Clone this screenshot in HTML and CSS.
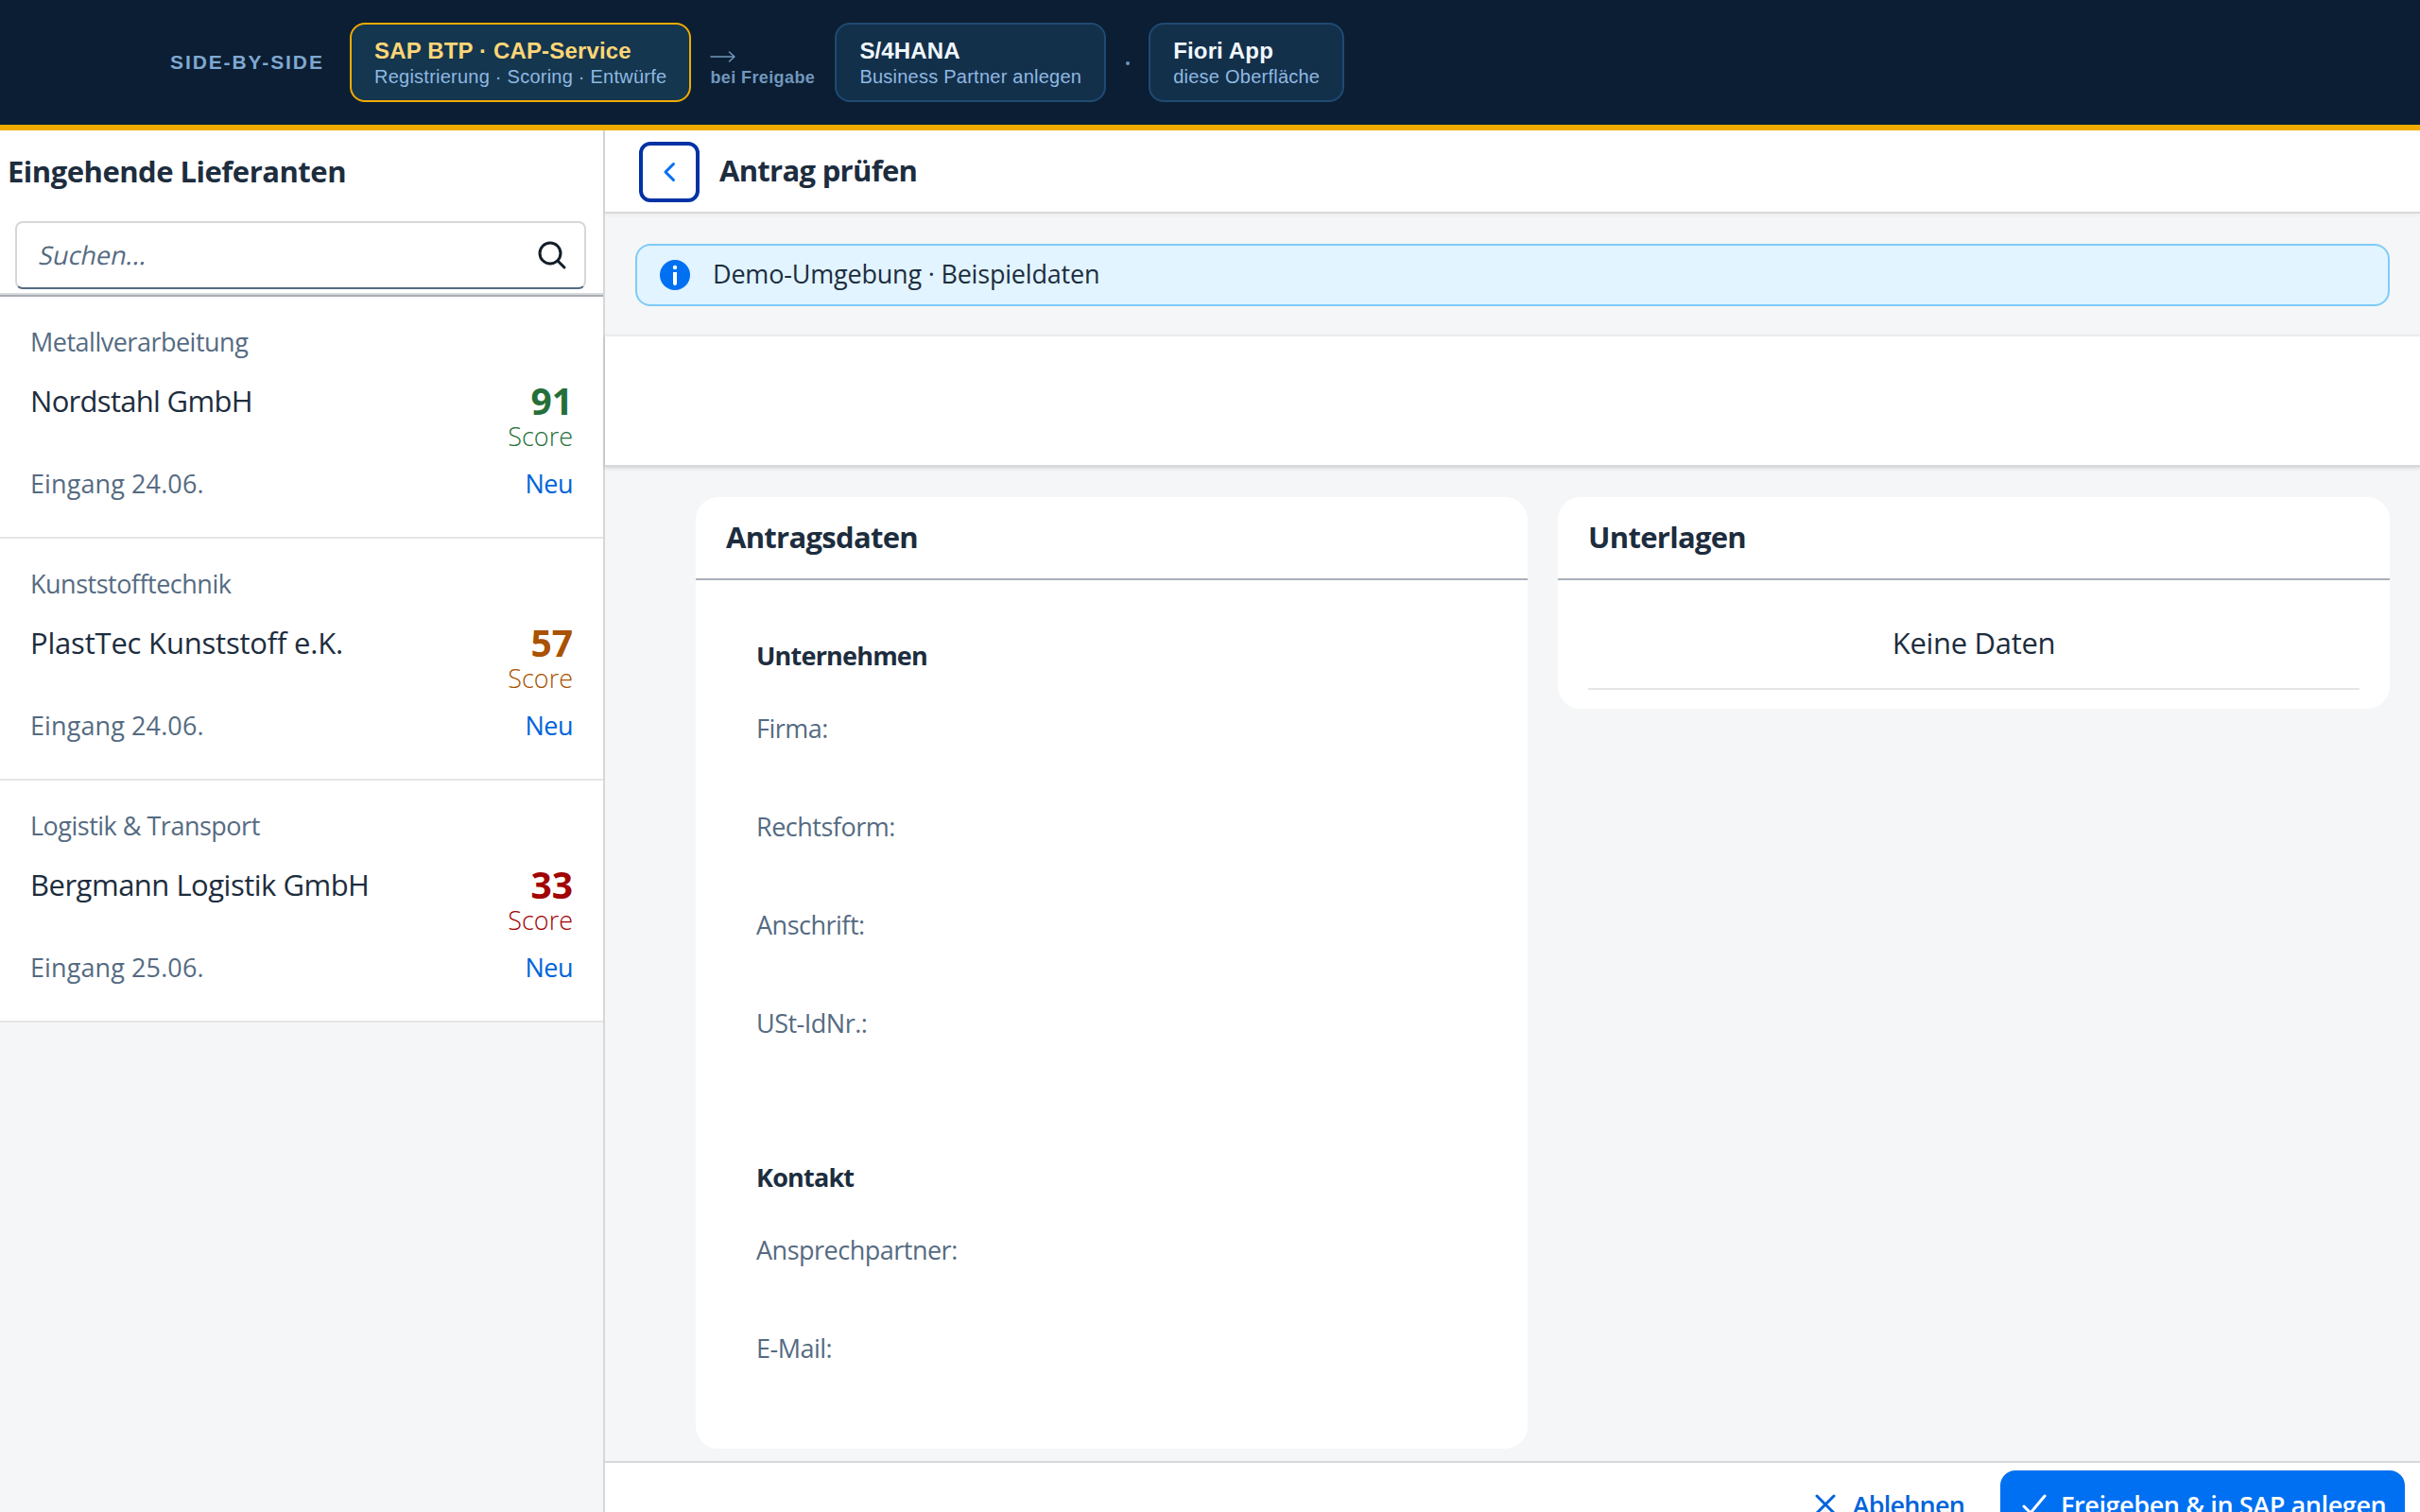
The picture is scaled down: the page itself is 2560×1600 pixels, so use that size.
FILE: index.html
```html
<!DOCTYPE html>
<html lang="de">
<head>
    <meta charset="UTF-8">
    <meta name="viewport" content="width=device-width, initial-scale=1.0">
    <title>Antrag prüfen</title>
    <link rel="stylesheet" href="styles.css">
</head>
<body>
    <header class="topbar">
        <span class="topbar-label">SIDE-BY-SIDE</span>
        <div class="node node-active">
            <b>SAP BTP · CAP-Service</b>
            <small>Registrierung · Scoring · Entwürfe</small>
        </div>
        <div class="link">
            <svg width="28" height="16" viewBox="0 0 28 16"><path d="M1 8h25M20.500 3l5.500 5-5.500 5"/></svg>
            <span>bei Freigabe</span>
        </div>
        <div class="node">
            <b>S/4HANA</b>
            <small>Business Partner anlegen</small>
        </div>
        <span class="dot"></span>
        <div class="node">
            <b>Fiori App</b>
            <small>diese Oberfläche</small>
        </div>
    </header>

    <main class="split">
        <aside class="master">
            <div class="master-head">
                <h2 class="wide">Eingehende Lieferanten</h2>
                <div class="search">
                    <span>Suchen...</span>
                    <svg width="32" height="32" viewBox="0 0 32 32"><circle cx="14" cy="14" r="11"/><path d="M22 22l7 7"/></svg>
                </div>
            </div>
            <ul class="list">
                <li class="good">
                    <p class="intro">Metallverarbeitung</p>
                    <div class="row">
                        <span class="name">Nordstahl GmbH</span>
                        <div class="score"><b>91</b><span>Score</span></div>
                    </div>
                    <div class="row foot"><span class="date">Eingang 24.06.</span><span class="state">Neu</span></div>
                </li>
                <li class="medium">
                    <p class="intro">Kunststofftechnik</p>
                    <div class="row">
                        <span class="name">PlastTec Kunststoff e.K.</span>
                        <div class="score"><b>57</b><span>Score</span></div>
                    </div>
                    <div class="row foot"><span class="date">Eingang 24.06.</span><span class="state">Neu</span></div>
                </li>
                <li class="bad">
                    <p class="intro">Logistik &amp; Transport</p>
                    <div class="row">
                        <span class="name">Bergmann Logistik GmbH</span>
                        <div class="score"><b>33</b><span>Score</span></div>
                    </div>
                    <div class="row foot"><span class="date">Eingang 25.06.</span><span class="state">Neu</span></div>
                </li>
            </ul>
        </aside>

        <section class="detail">
            <div class="detail-head">
                <button class="back">
                    <svg width="16" height="24" viewBox="0 0 16 24"><path d="M12.500 3.500L4 12l8.500 8.500"/></svg>
                </button>
                <h2>Antrag prüfen</h2>
            </div>
            <div class="content">
                <div class="strip">
                    <svg width="32" height="32" viewBox="0 0 32 32"><circle cx="16" cy="16" r="16"/><circle class="i" cx="16" cy="8" r="2.200"/><path class="i" d="M14 13h4v12a2 2 0 0 1-4 0z"/></svg>
                    <span>Demo-Umgebung · Beispieldaten</span>
                </div>
                <div class="object-header"></div>
                <div class="cards">
                    <div class="card">
                        <h2>Antragsdaten</h2>
                        <div class="form">
                            <h3>Unternehmen</h3>
                            <label>Firma:</label>
                            <label>Rechtsform:</label>
                            <label>Anschrift:</label>
                            <label>USt-IdNr.:</label>
                            <h3>Kontakt</h3>
                            <label>Ansprechpartner:</label>
                            <label>E-Mail:</label>
                        </div>
                    </div>
                    <div class="card">
                        <h2>Unterlagen</h2>
                        <div class="table">
                            <div class="empty">Keine Daten</div>
                        </div>
                    </div>
                </div>
            </div>
            <footer class="actions">
                <button class="reject">
                    <svg width="24" height="24" viewBox="0 0 24 24"><path d="M3 3l18 18M21 3L3 21"/></svg>
                    Ablehnen
                </button>
                <button class="approve">
                    <svg width="28" height="24" viewBox="0 0 28 24"><path d="M3 14l7 7L25 3"/></svg>
                    Freigeben &amp; in SAP anlegen
                </button>
            </footer>
        </section>
    </main>
</body>
</html>
```
FILE: styles.css
```css
* {
    box-sizing: border-box;
}
body {
    margin: 0;
    height: 1600px;
    overflow: hidden;
    display: flex;
    flex-direction: column;
    font-family: "Open Sans", "Noto Sans", sans-serif;
    font-size: 27px;
    letter-spacing: -0.5px;
    color: #1d2d3e;
    background: #f5f6f7;
}
h2, h3, p, ul {
    margin: 0;
    padding: 0;
}
h2 {
    font-size: 31px;
    letter-spacing: -0.7px;
}
svg {
    fill: none;
    stroke: currentColor;
    stroke-linecap: round;
    stroke-linejoin: round;
    flex: none;
}
button {
    font: inherit;
    letter-spacing: inherit;
    border: none;
    background: none;
}

/* architecture bar */
.topbar {
    height: 138px;
    flex: none;
    display: flex;
    align-items: center;
    padding-left: 180px;
    font-family: "Liberation Sans", Arial, sans-serif;
    background: #0b1e33;
    border-bottom: 6px solid #f0ab00;
    letter-spacing: 0;
}
.topbar-label {
    width: 190px;
    font-size: 21px;
    font-weight: 700;
    letter-spacing: 1.9px;
    color: #7fa8d1;
}
.node {
    height: 84px;
    padding: 14px 24px 0;
    border: 2px solid #1f4a73;
    border-radius: 16px;
    background: #13304b;
    white-space: nowrap;
}
.node b {
    display: block;
    font-size: 24px;
    line-height: 28px;
    letter-spacing: 0.15px;
    color: #f2f8ff;
}
.node small {
    display: block;
    font-size: 20px;
    line-height: 26px;
    letter-spacing: 0.24px;
    color: #8fb8e0;
}
.node-active {
    border-color: #f0ab00;
    background: #14364f;
}
.node-active b {
    color: #ffd677;
}
.link {
    width: 152px;
    padding: 15px 0 0 20px;
    display: flex;
    flex-direction: column;
    font-size: 18px;
    font-weight: 700;
    line-height: 26px;
    letter-spacing: 0.4px;
    color: #7297bb;
}
.link svg {
    margin-bottom: 1px;
    stroke-width: 1.5;
}
.dot {
    width: 4px;
    height: 4px;
    margin: 2px 20px 0 21px;
    border-radius: 50%;
    background: #7297bb;
}

.split {
    flex: 1;
    min-height: 0;
    display: flex;
}

/* supplier list */
.master {
    width: 640px;
    flex: none;
    border-right: 2px solid #d5d7d9;
}
.master-head {
    height: 176px;
    padding: 22px 18px 0 8px;
    background: #fff;
    border-bottom: 2px solid #a8adb5;
    box-shadow: inset 0 -2px #d9dbdd;
}
.master-head h2 {
    height: 74px;
    line-height: 42px;
}
.master-head .wide {
    letter-spacing: -0.5px;
}
.search {
    height: 72px;
    margin-left: 8px;
    padding: 0 18px 0 24px;
    display: flex;
    align-items: center;
    justify-content: space-between;
    border: 2px solid #d5d7d9;
    border-bottom-color: #556b81;
    border-radius: 8px;
    color: #556b81;
}
.search span {
    margin-bottom: 2px;
    letter-spacing: 0;
    transform: skewX(-12deg);
}
.search svg {
    color: #131e29;
    stroke-width: 3;
}
.list {
    list-style: none;
}
.list li {
    height: 256px;
    padding: 32px 32px 0;
    background: #fff;
    border-bottom: 2px solid #e5e5e5;
    line-height: 32px;
}
.intro, .date {
    color: #556b82;
}
.intro {
    margin-bottom: 26px;
}
.row {
    display: flex;
    justify-content: space-between;
}
.name {
    font-size: 31px;
    line-height: 40px;
    letter-spacing: -0.5px;
}
.good .name {
    letter-spacing: -0.7px;
}
.medium .name {
    letter-spacing: -0.2px;
}
.score {
    display: flex;
    flex-direction: column;
    align-items: flex-end;
    letter-spacing: 0;
}
.score b {
    font-size: 39px;
    line-height: 40px;
}
.score span {
    font-weight: 300;
    line-height: 36px;
}
.foot {
    margin-top: 16px;
}
.date {
    letter-spacing: 0.1px;
}
.state {
    color: #0064d9;
}
.good .score {
    color: #256f3a;
}
.medium .score {
    color: #a95200;
}
.bad .score {
    color: #a20303;
}

/* detail page */
.detail {
    flex: 1;
    display: flex;
    flex-direction: column;
}
.detail-head {
    height: 88px;
    flex: none;
    display: flex;
    align-items: center;
    gap: 21px;
    padding: 0 36px;
    background: #fff;
    border-bottom: 2px solid #d9d9d9;
    box-shadow: 0 2px 4px rgba(34, 53, 72, 0.05);
}
.detail-head h2 {
    margin-bottom: 2px;
}
.back {
    width: 64px;
    height: 64px;
    margin-top: 2px;
    display: flex;
    align-items: center;
    justify-content: center;
    border: 4px solid #0032a5;
    border-radius: 12px;
    color: #0070f2;
}
.back svg {
    stroke-width: 3;
}
.content {
    height: 1320px;
    flex: none;
}
.strip {
    height: 66px;
    margin: 32px;
    padding-left: 24px;
    display: flex;
    align-items: center;
    gap: 24px;
    border: 2px solid #7fcbf8;
    border-radius: 16px;
    background: #e1f4ff;
    letter-spacing: -0.2px;
}
.strip span {
    margin-bottom: 3px;
}
.strip svg {
    margin-bottom: 1px;
    fill: #0070f2;
    stroke: none;
}
.strip .i {
    fill: #fff;
}
.object-header {
    height: 138px;
    background: #fff;
    border-bottom: 2px solid #d9d9d9;
    box-shadow: 0 0 4px rgba(34, 53, 72, 0.16), 0 2px 4px rgba(34, 53, 72, 0.08);
}
.cards {
    display: grid;
    grid-template-columns: 1fr 1fr;
    align-items: start;
    gap: 32px;
    padding: 32px 32px 0 96px;
}
.card {
    background: #fff;
    border-radius: 24px;
}
.card h2 {
    height: 88px;
    padding-left: 32px;
    line-height: 85px;
    border-bottom: 2px solid #a8b0bb;
}
.form {
    height: 919px;
    padding: 60px 64px 0;
}
.form h3 {
    margin-bottom: 36px;
    font-size: 27px;
    line-height: 40px;
    letter-spacing: -0.8px;
}
.form label {
    display: block;
    height: 104px;
    line-height: 41px;
    color: #556b82;
}
.form label + h3 {
    margin-top: 60px;
}
.table {
    padding: 18px 32px 20px;
}
.empty {
    height: 98px;
    line-height: 96px;
    border-bottom: 2px solid #e5e5e5;
    text-align: center;
    font-size: 31px;
    letter-spacing: -0.3px;
}
.actions {
    height: 90px;
    flex: none;
    display: flex;
    justify-content: flex-end;
    padding: 8px 16px;
    background: #fff;
    border-top: 2px solid #d9d9d9;
}
.actions button {
    height: 72px;
    display: flex;
    align-items: center;
    border-radius: 16px;
    font-weight: 600;
    white-space: nowrap;
    letter-spacing: -0.4px;
}
.actions svg {
    stroke-width: 3;
}
.actions .reject {
    margin-right: 18px;
    padding: 0 20px;
    gap: 17px;
    color: #0064d9;
    letter-spacing: -0.8px;
}
.approve {
    width: 428px;
    padding: 0 0 0 22px;
    gap: 14px;
    background: #0070f2;
    color: #fff;
}
```
